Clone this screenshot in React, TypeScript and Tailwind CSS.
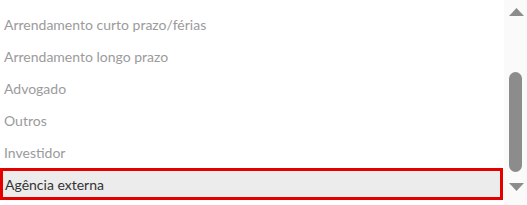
const items = [
  "Arrendamento curto prazo/férias",
  "Arrendamento longo prazo",
  "Advogado",
  "Outros",
  "Investidor",
  "Agência externa",
];

export default function App() {
  return (
    <div className="flex h-[205px] w-[527px] overflow-hidden bg-white font-['Lato',sans-serif] text-[14px]">
      <div className="flex w-[504px] flex-col pt-[8px]">
        {items.map((item, i) =>
          i === items.length - 1 ? (
            <div
              key={item}
              className="flex h-[32px] w-[503px] items-center border-[3px] border-[#e50000] bg-[#ececec] pl-[2px] text-[#333]"
            >
              {item}
            </div>
          ) : (
            <div key={item} className="flex h-[32px] items-center pl-[4px] text-[#9b9b9b]">
              {item}
            </div>
          )
        )}
      </div>
      <div className="flex w-[23px] flex-col items-center bg-[#fafafa] pt-[8px]">
        <svg width="15" height="8" viewBox="0 0 15 8" className="ml-[1px]">
          <polygon points="7.5,0 15,8 0,8" fill="#8c8c8c" />
        </svg>
        <div className="mt-[56px] h-[100px] w-[13px] rounded-t-[7px] rounded-b-[7px] bg-[#8c8c8c]" />
        <svg width="15" height="8" viewBox="0 0 15 8" className="mt-[11px] ml-[1px]">
          <polygon points="0,0 15,0 7.5,8" fill="#8c8c8c" />
        </svg>
      </div>
    </div>
  );
}
